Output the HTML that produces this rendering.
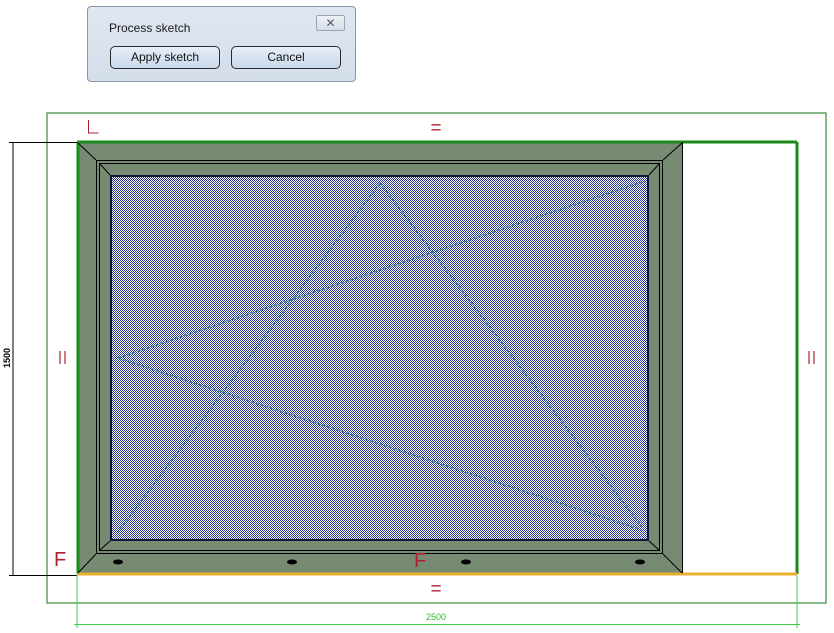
<!DOCTYPE html><html><head><style>
body{margin:0;width:834px;height:633px;background:#fff;position:relative;overflow:hidden;font-family:"Liberation Sans",sans-serif}
.dlg{position:absolute;left:87px;top:6px;width:269px;height:76px;border:1px solid #8a96a8;border-radius:4px;background:linear-gradient(#dfe7f1,#d4deea);box-sizing:border-box}
.dlg .t{position:absolute;left:21px;top:14px;font-size:12px;color:#1a1a1a}
.x{position:absolute;left:228px;top:8px;width:29px;height:16px;border:1px solid #9aa4b2;border-radius:2px;background:linear-gradient(#eef2f7,#d6dde6);box-sizing:border-box;font-size:12px;text-align:center;line-height:14px;color:#556}
.b{position:absolute;top:39px;height:23px;border:1px solid #2c2c2c;border-radius:5px;background:linear-gradient(#e6eef8,#c9d8ea);box-sizing:border-box;font-size:12px;text-align:center;line-height:21px;color:#111}
.glass{position:absolute;left:110px;top:175px;width:539px;height:366px;background:repeating-conic-gradient(#283490 0 25%,#fff 0 50%) 0 0/2px 2px;border:2px solid #101838;box-sizing:border-box}
</style></head><body>
<div class="dlg"><div class="t">Process sketch</div><div class="x">✕</div>
<div class="b" style="left:22px;width:110px">Apply sketch</div>
<div class="b" style="left:143px;width:110px">Cancel</div></div>
<svg width="834" height="633" style="position:absolute;left:0;top:0">
<rect x="47" y="113" width="779" height="490" fill="none" stroke="#3a8a3a" stroke-width="1.2"/>
<polygon points="77,142 683,142 683,574 77,574" fill="#778a72"/>
<line x1="77" y1="142" x2="797" y2="142" stroke="#1a8a1a" stroke-width="3"/>
<line x1="797" y1="142" x2="797" y2="574" stroke="#1a8a1a" stroke-width="3"/>
<line x1="78" y1="142" x2="78" y2="574" stroke="#1a8a1a" stroke-width="3"/>
<line x1="77" y1="574" x2="797" y2="574" stroke="#e8b030" stroke-width="3"/>
<line x1="682.5" y1="142" x2="682.5" y2="573" stroke="#000"/>
<rect x="96.5" y="160.5" width="566" height="393" fill="none" stroke="#000"/>
<rect x="99.5" y="163.5" width="560" height="387" fill="none" stroke="#000"/>
<g stroke="#000" stroke-width="1">
<line x1="78" y1="143" x2="96" y2="160"/><line x1="682" y1="143" x2="663" y2="160"/>
<line x1="78" y1="573" x2="96" y2="554"/><line x1="682" y1="573" x2="663" y2="554"/>
<line x1="100" y1="164" x2="110" y2="175"/><line x1="659" y1="164" x2="649" y2="175"/>
<line x1="100" y1="550" x2="110" y2="541"/><line x1="659" y1="550" x2="649" y2="541"/>
</g>
<g fill="#000"><ellipse cx="118" cy="562" rx="5" ry="2.5"/><ellipse cx="292" cy="562" rx="5" ry="2.5"/><ellipse cx="466" cy="562" rx="5" ry="2.5"/><ellipse cx="640" cy="562" rx="5" ry="2.5"/></g>
<line x1="13" y1="142" x2="13" y2="575" stroke="#000"/>
<line x1="9" y1="142.5" x2="77" y2="142.5" stroke="#000"/>
<line x1="9" y1="575.5" x2="77" y2="575.5" stroke="#000"/>
<line x1="77" y1="575" x2="77" y2="628" stroke="#44cc44"/>
<line x1="797" y1="575" x2="797" y2="628" stroke="#44cc44"/>
<line x1="74" y1="624.5" x2="800" y2="624.5" stroke="#44cc44"/>
<text x="436" y="620" font-size="9" fill="#33bb33" text-anchor="middle" font-family="Liberation Sans">2500</text>
<text transform="translate(10,358) rotate(-90)" font-size="9" fill="#000" text-anchor="middle" font-weight="bold" font-family="Liberation Sans">1500</text>
<g fill="#b02030" font-family="Liberation Sans" font-size="19">
<path d="M88.5 120v13h10" stroke="#b02030" fill="none"/>
<text x="436" y="134" text-anchor="middle">=</text>
<text x="436" y="595" text-anchor="middle">=</text>
<text x="54" y="566" font-size="20">F</text><text x="414" y="567" font-size="20">F</text>
</g>
<g stroke="#b02030" stroke-width="1.2"><line x1="60" y1="351" x2="60" y2="364"/><line x1="65" y1="351" x2="65" y2="364"/><line x1="809" y1="351" x2="809" y2="364"/><line x1="814" y1="351" x2="814" y2="364"/></g>
</svg>
<div class="glass"></div>
<svg width="834" height="633" style="position:absolute;left:0;top:0">
<g stroke="#3a7a8a" stroke-width="1.6" stroke-dasharray="3 2" fill="none">
<line x1="118" y1="358" x2="645" y2="181"/>
<line x1="118" y1="358" x2="642" y2="530"/>
<line x1="380" y1="183" x2="118" y2="532"/>
<line x1="380" y1="183" x2="642" y2="527"/>
</g></svg>
</body></html>
